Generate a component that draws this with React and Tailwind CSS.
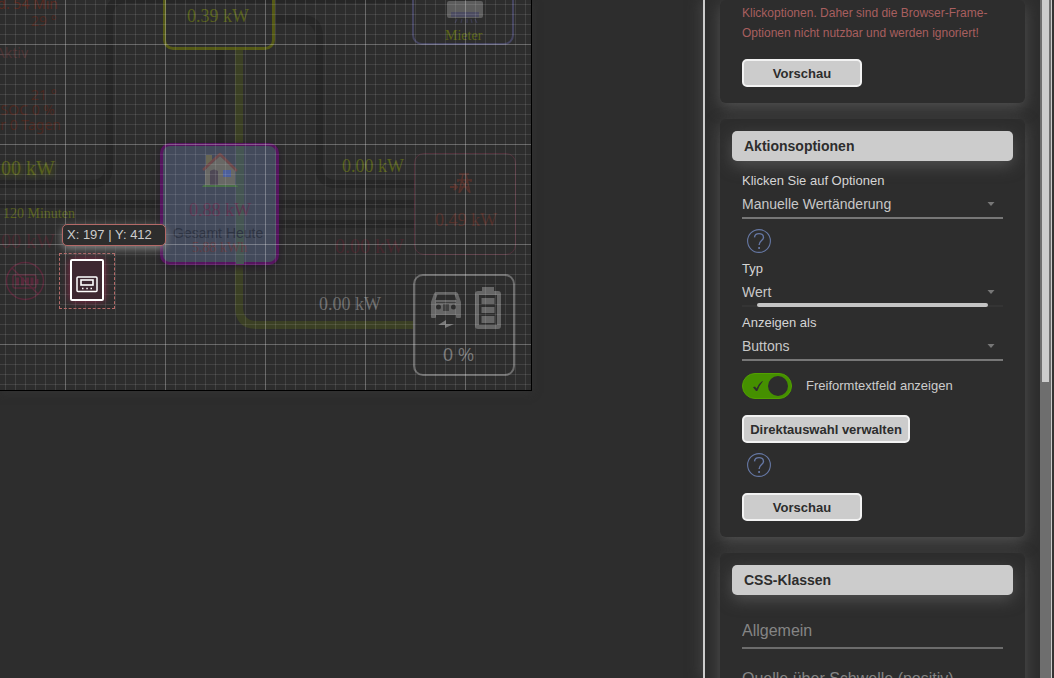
import React from "react";

function HelpButton() {
  return (
    <button type="button" aria-label="Hilfe" className="ml-[5px] mt-2.5 block size-6 text-[#6678a5]">
      <svg viewBox="0 0 24 24" className="size-6" fill="none" stroke="currentColor">
        <circle cx="12" cy="12" r="11.4" strokeWidth="1.1" />
        <path d="M7.5 8.4C7.7 5.9 9.5 4.600 12 4.600c2.600 0 4.500 1.500 4.500 3.800 0 3.200-4.400 3.300-4.400 7.600" strokeWidth="1.4" />
        <path d="M12.100 18v1.900" strokeWidth="1.7" />
      </svg>
    </button>
  );
}

function SelectField({ id, label, value, active = false, className = "" }) {
  return (
    <div className={className}>
      <label htmlFor={id} className="block text-[13px] leading-5 text-[#d5d5d5]">{label}</label>
      <div className="relative">
        <select
          id={id}
          defaultValue={value}
          className={
            "block h-7 w-full appearance-none border-b-2 bg-transparent pr-6 text-sm text-[#c8c8c8] outline-none " +
            (active ? "border-[#343434]" : "border-[#777777]")
          }
        >
          <option>{value}</option>
        </select>
        <svg viewBox="0 0 8 4" className="pointer-events-none absolute right-2 top-[11px] h-1 w-2" fill="#777777">
          <path d="M0.500 0h7L4 4z" />
        </svg>
        {active && <span className="absolute inset-x-[15px] bottom-0 h-1 rounded-full bg-[#c4c4c4]" />}
      </div>
    </div>
  );
}

function ActionButton({ children, className = "" }) {
  return (
    <button
      type="button"
      className={"flex h-7 items-center justify-center rounded-[5px] border-2 border-[#f2f2f2] bg-[#cccccc] pt-0.5 text-[13px] leading-5 font-bold text-[#2d2d2d] " + className}
    >
      {children}
    </button>
  );
}

function Card({ title, children, className = "" }) {
  return (
    <section className={"relative rounded-md bg-[#2d2d2d] shadow-[0_5px_15px_#505050] " + className}>
      {title && (
        <div className="px-3 pt-3">
          <h2 className="rounded-[5px] bg-[#cccccc] px-3 text-sm font-bold leading-[30px] text-[#2d2d2d] shadow-[0_5px_15px_#505050]">
            {title}
          </h2>
        </div>
      )}
      <div className="relative px-[22px]">{children}</div>
    </section>
  );
}

function FlowLines() {
  return (
    <svg className="absolute inset-0 h-[390px] w-[531px]" viewBox="0 0 531 390" fill="none" strokeWidth="8">
      <g stroke="#262626">
        <path d="M0 184H91Q109 184 109 166V16Q109-1 127-1H413" />
        <path d="M220 50V145" />
        <path d="M275 19H301Q319 19 319 37V166Q319 184 337 184H414" />
        <path d="M0 204H414M279 224H414" />
      </g>
      <path d="M239 48V307Q239 325 257 325H414" stroke="#3b4024" />
    </svg>
  );
}

function Grid() {
  return (
    <svg className="pointer-events-none absolute inset-0 h-[390px] w-[531px]" aria-hidden="true">
      <defs>
        <pattern id="minor" width="10" height="10" patternUnits="userSpaceOnUse">
          <path d="M5.500 0V10M0 4.500H10" stroke="#ffffff" strokeOpacity="0.1" />
        </pattern>
        <pattern id="major" width="100" height="100" patternUnits="userSpaceOnUse">
          <path d="M65.500 0V100M0 44.500H100" stroke="#ffffff" strokeOpacity="0.2" />
        </pattern>
      </defs>
      <rect width="531" height="390" fill="url(#minor)" />
      <rect width="531" height="390" fill="url(#major)" />
    </svg>
  );
}

function House() {
  return (
    <svg className="absolute left-[39px] top-[7px] h-9 w-9" viewBox="0 0 36 36">
      <path d="M4 2h6v13H4z" fill="#686653" />
      <path d="M3 17 18 3l15 14v15H3z" fill="#686865" />
      <path d="M1 17 18 1l17 17" fill="none" stroke="#6d484b" strokeWidth="2.5" />
      <path d="M8 32V18q4-3 8 0v14z" fill="#4e4855" />
      <path d="M21 17h8v7h-8z" fill="#4c5f9c" />
      <path d="M0 34q1-3 5-2h28q3 0 3 2z" fill="#4a7049" />
    </svg>
  );
}

const serif = "absolute whitespace-nowrap font-['Liberation_Serif',serif] leading-5 ";
const sans = "absolute whitespace-nowrap font-['Noto_Sans',sans-serif] text-sm leading-4 ";

function Canvas() {
  return (
    <div className="relative h-[391px] w-[532px] overflow-hidden border-b border-r border-black bg-[#2d2d2d] shadow-[0_2px_8px_#333333]">
      <FlowLines />

      <span className={sans + "right-[473px] -top-1 text-[#58291f]"}>6 Std. 54 Min</span>
      <span className={sans + "left-[31px] top-[13px] text-[#4a271f]"}>29 °</span>
      <span className={sans + "right-[503px] top-[45px] text-[#4b3334]"}>Aktiv</span>
      <span className={sans + "left-[31px] top-[87px] text-[#4a271f]"}>21 °</span>
      <span className={sans + "right-[476px] top-[102px] text-[#4a271f]"}>SOC 0 %</span>
      <span className={sans + "right-[470px] top-[117px] text-[#4a271f]"}>vor 0 Tagen</span>

      <span className={serif + "right-[476px] top-[158px] text-xl text-[#57601c] [text-shadow:2px_2px_4px_#46501c]"}>0.00 kW</span>
      <span className={serif + "left-[3px] top-[204px] text-sm text-[#57601c]"}>120 Minuten</span>
      <span className={serif + "right-[476px] top-[231px] text-xl text-[#43272d]"}>0.00 kW</span>

      <svg className="absolute left-[5px] top-[261px] size-10" viewBox="0 0 40 40" fill="none" stroke="#57283a" strokeWidth="1.5">
        <circle cx="20" cy="20" r="18.5" />
        <path d="M7 7 33 33" />
        <rect x="8" y="14" width="23" height="13" rx="2" />
        <path d="M32 18v5" strokeWidth="3" />
        <path d="M12.500 16.500v8M17.500 16.500v8M22.500 16.500v8M27 16.500v8" strokeWidth="3" />
      </svg>

      <div className="absolute -top-5 left-[163px] h-[70px] w-[112px] rounded-[10px] border-[3px] border-[#555a16]" />
      <span className={serif + "left-[187px] top-1.5 text-lg text-[#57601c]"}>0.39 kW</span>

      <div className="absolute -top-5 left-[412px] h-[65px] w-[102px] rounded-[10px] border-2 border-[#454560]" />
      <svg className="absolute left-[446px] top-0 h-6 w-10" viewBox="0 0 40 24">
        <rect x="1" y="1" width="36" height="17" rx="2" fill="#5d5d5d" />
        <path d="M5 12h28v5H5z" fill="#4b4b60" />
        <path d="M11 19l-2 4M16 19l-1 4M21 19v4M25 19l1 4M29 19l2 4" stroke="#3b3b50" strokeWidth="1.2" />
      </svg>
      <span className={serif + "left-[445px] top-[26px] text-sm text-[#5a6415]"}>Mieter</span>

      <span className={serif + "left-[342px] top-[156px] text-lg text-[#57601c]"}>0.00 kW</span>
      <span className={serif + "left-[335px] top-[236px] text-xl text-[#45272d]"}>0.00 kW</span>
      <span className={serif + "left-[319px] top-[294px] text-lg text-[#6c6c6c]"}>0.00 kW</span>

      <div className="absolute left-[414px] top-[153px] h-[102px] w-[102px] rounded-[10px] border border-[#50303a]" />
      <svg className="absolute left-[450px] top-[172px] h-[22px] w-6" viewBox="0 0 24 22" fill="none" stroke="#55312b" strokeWidth="1.5">
        <path d="M0 15h6M4 12l3 3-3 3" strokeWidth="2" />
        <path d="M9 2h10M7 8h15M8 10V7M21 10V7M13 2 9 21M16 2l4 19M11 15h7M12 9l7 11M17 9l-7 11" />
      </svg>
      <span className={serif + "left-[435px] top-[210px] text-lg text-[#53302a]"}>0.49 kW</span>

      <div className="absolute left-[160px] top-[143px] h-[122px] w-[119px] rounded-[10px] border-[3px] border-[#56145f] bg-[#434a5b] shadow-[0_2px_6px_#251c2a]">
        <span className="absolute -bottom-0.5 left-[73px] top-0 w-2 bg-[#455653]" />
        <House />
        <span className={serif + "left-[26px] top-[54px] text-lg text-[#5d3450]"}>0.88 kW</span>
        <span className="absolute left-2.5 top-[77px] whitespace-nowrap text-sm leading-5 text-[#2e3443]">Gesamt Heute</span>
        <span className={serif + "left-[29px] top-[92px] text-sm text-[#603d43]"}>5.88 kWh</span>
      </div>

      <div className="absolute left-[413px] top-[274px] h-[102px] w-[102px] rounded-[10px] border-2 border-[#6c6c6c]">
        <svg className="absolute left-4 top-[15px] h-[38px] w-[30px]" viewBox="0 0 30 38">
          <path fillRule="evenodd" fill="#666666" d="M5 1h20q1.500 0 2 1.500L30 11v15q0 1-1 1h-3q-1 0-1-1v-2H5v2q0 1-1 1H1q-1 0-1-1V11L3 2.500Q3.500 1 5 1zM6.500 3.500 4.500 9h21l-2-5.500zM7.500 13.500a2.500 2.500 0 1 0 0 5 2.500 2.500 0 0 0 0-5zM22.500 13.500a2.500 2.500 0 1 0 0 5 2.500 2.500 0 0 0 0-5z" />
          <path fill="#404040" d="M5 11h20v1H5zM12 13h6v7h-6z" />
          <path d="M15 29v4h8l-9 4v-3H7z" fill="#777777" />
        </svg>
        <svg className="absolute left-[60px] top-[11px] h-[42px] w-[26px]" viewBox="0 0 26 42" fill="#666666">
          <path fillRule="evenodd" d="M7 0h12v4h4q3 0 3 3v32q0 3-3 3H3q-3 0-3-3V7q0-3 3-3h4zM4 8v30h18V8z" />
          <path d="M6.500 11h13v6h-13zM6.500 20h13v6h-13zM6.500 29h13v7h-13z" />
        </svg>
        <span className="absolute left-7 top-[69px] whitespace-nowrap text-lg leading-5 text-[#777777]">0 %</span>
      </div>

      <Grid />

      <div className="absolute left-[59px] top-[253px] size-14 border border-dashed border-[#b56a68]">
        <svg className="absolute left-[9px] top-1 h-[44px] w-[36px] overflow-visible" viewBox="0 0 36 44" fill="none" stroke="#ffffff">
          <rect x="2" y="2" width="32" height="40" rx="1" fill="#3e2831" strokeWidth="2" className="drop-shadow-[0_0_4px_#8a2848]" />
          <rect x="8" y="19" width="20" height="14.500" rx="1" strokeWidth="1.5" />
          <rect x="12" y="22" width="12" height="5" strokeWidth="1.6" />
          <path d="M13 30.500h1.500M17.300 30.500h1.500M21.500 30.500h1.500" strokeWidth="1.500" />
        </svg>
      </div>
      <div className="absolute left-[62px] top-[224px] h-[22px] w-[104px] rounded-[5px] border border-[#b56a68] bg-[#2d2d2d] pl-1 text-[13px] leading-5 text-[#cccccc] shadow-[0_3px_8px_#858585]">
        X: 197 | Y: 412
      </div>
    </div>
  );
}

export default function App() {
  return (
    <div className="flex h-screen overflow-hidden bg-[#2d2d2d] font-['Liberation_Sans',Arial,sans-serif]">
      <main className="min-w-0 flex-1">
        <Canvas />
      </main>

      <aside className="mr-0.5 flex w-[349px] shrink-0 border-l-2 border-r border-[#cccccc] bg-[#2d2d2d] shadow-[-2px_0_12px_#444444]">
        <div className="flex min-w-0 flex-1 flex-col gap-4 overflow-hidden px-[15px]">
          <Card className="shrink-0 pb-4 pt-[3px]">
            <p className="text-xs leading-5 text-[#a85f5f]">
              Klickoptionen. Daher sind die Browser-Frame-Optionen nicht nutzbar und werden ignoriert!
            </p>
            <ActionButton className="mt-4 w-[120px]">Vorschau</ActionButton>
          </Card>

          <Card title="Aktionsoptionen" className="shrink-0 pb-4">
            <SelectField id="click" label="Klicken Sie auf Optionen" value="Manuelle Wertänderung" className="pt-2.5" />
            <HelpButton />
            <SelectField id="type" label="Typ" value="Wert" active className="mt-1.5" />
            <SelectField id="display" label="Anzeigen als" value="Buttons" className="mt-1.5" />

            <label className="mt-3 flex items-center gap-3.5 text-[13px] text-[#cccccc]">
              <input type="checkbox" role="switch" defaultChecked className="peer sr-only" />
              <span className="flex h-[26px] w-[50px] items-center justify-between rounded-full border border-[#51a000] bg-[#459000] pl-2 pr-[3px]">
                <svg viewBox="0 0 14 14" className="size-3.5" fill="#2d2d2d">
                  <path d="M2 8.200 4 7.500 5.500 9.500Q7.500 4.500 11.300 2L11.800 2.400Q8.500 6 6.300 12L5 12z" />
                </svg>
                <span className="size-5 rounded-full bg-[#2d2d2d]" />
              </span>
              Freiformtextfeld anzeigen
            </label>

            <ActionButton className="mt-4 w-[168px]">Direktauswahl verwalten</ActionButton>
            <HelpButton />
            <ActionButton className="mt-4 w-[120px]">Vorschau</ActionButton>
          </Card>

          <Card title="CSS-Klassen" className="shrink-0 pb-4">
            <input
              aria-label="Allgemein"
              placeholder="Allgemein"
              className="mt-[18px] block h-9 w-full border-b-2 border-[#6c6c6c] bg-transparent pt-0.5 text-base outline-none placeholder:text-[#858585]"
            />
            <input
              aria-label="Quelle über Schwelle (positiv)"
              placeholder="Quelle über Schwelle (positiv)"
              className="mt-3 block h-9 w-full border-b-2 border-[#6c6c6c] bg-transparent pt-0.5 text-base outline-none placeholder:text-[#858585]"
            />
          </Card>
        </div>
        <div className="w-[11px] bg-[#6e6e6e] px-0.5">
          <div className="h-[382px] w-[7px] bg-[#cccccc]" />
        </div>
      </aside>
    </div>
  );
}
